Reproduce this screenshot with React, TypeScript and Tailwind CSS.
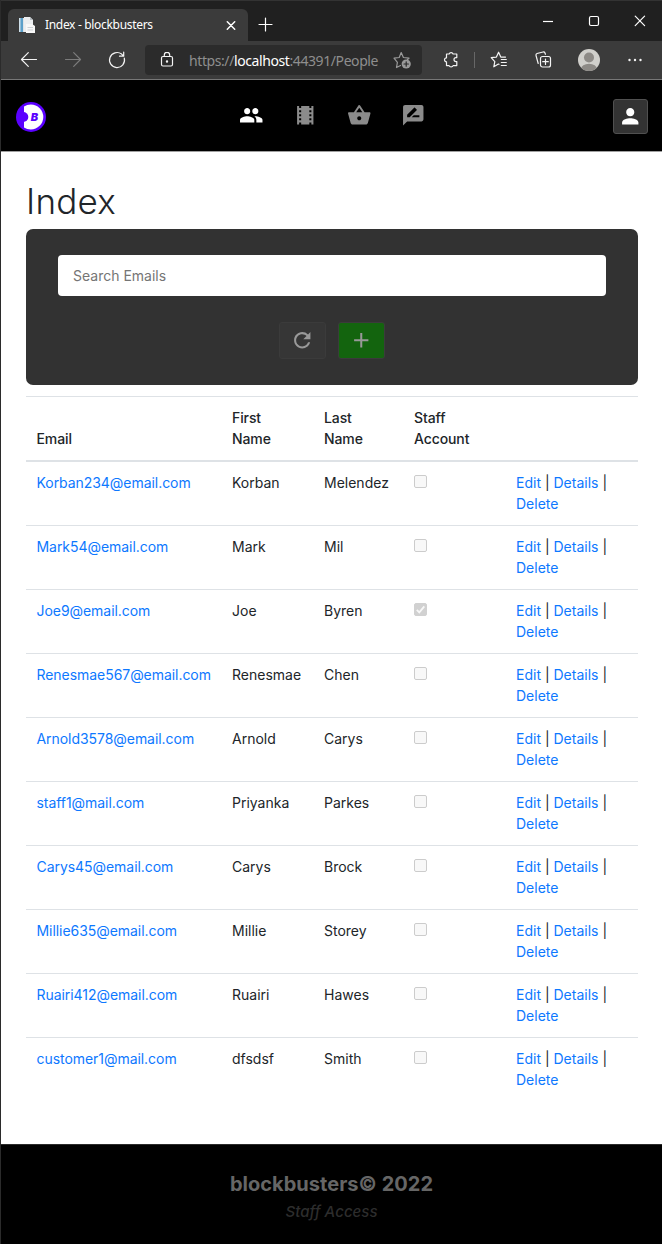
import type { ReactNode } from "react";
import {
  MdAdd,
  MdPeople,
  MdPerson,
  MdRateReview,
  MdRefresh,
  MdShoppingBasket,
  MdTheaters,
} from "react-icons/md";

const people = [
  { email: "Korban234@email.com", first: "Korban", last: "Melendez", staff: false },
  { email: "Mark54@email.com", first: "Mark", last: "Mil", staff: false },
  { email: "Joe9@email.com", first: "Joe", last: "Byren", staff: true },
  { email: "Renesmae567@email.com", first: "Renesmae", last: "Chen", staff: false },
  { email: "Arnold3578@email.com", first: "Arnold", last: "Carys", staff: false },
  { email: "staff1@mail.com", first: "Priyanka", last: "Parkes", staff: false },
  { email: "Carys45@email.com", first: "Carys", last: "Brock", staff: false },
  { email: "Millie635@email.com", first: "Millie", last: "Storey", staff: false },
  { email: "Ruairi412@email.com", first: "Ruairi", last: "Hawes", staff: false },
  { email: "customer1@mail.com", first: "dfsdsf", last: "Smith", staff: false },
];

function Line({ w, h, className, children }: { w: number; h: number; className?: string; children: ReactNode }) {
  return (
    <svg
      width={w}
      height={h}
      viewBox={`0 0 ${w} ${h}`}
      fill="none"
      stroke="currentColor"
      strokeWidth="1.2"
      strokeLinecap="round"
      strokeLinejoin="round"
      className={`shrink-0 ${className ?? ""}`}
    >
      {children}
    </svg>
  );
}

function TabStrip() {
  return (
    <div className="flex h-[41px] items-start border-t border-[#333333] bg-[#202020] pl-[7px] text-white">
      <div className="mt-2 flex h-8 w-[240px] items-center rounded-t-md bg-[#3b3b3b] pr-2 pl-[11px]">
        <svg width="16" height="17" viewBox="0 0 16 17" className="shrink-0">
          <path d="M0 1h10v14H0z" fill="#dfe3e6" />
          <path d="M0 1h4v14H0z" fill="#5b9fc9" />
          <path d="M0 1h1.500v14H0z" fill="#cfe0ea" />
          <path d="M5 0h6l3 3v12H5z" fill="#eceef0" />
          <path d="M11 0l3 3h-3z" fill="#b9bfc4" />
          <path d="M7 7h6l3 2v7H7z" fill="#f8f8f8" />
          <path d="M8.500 10.500H14M8.500 13H14" stroke="#cdd1d5" />
        </svg>
        <span className="ml-[10px] text-[12px] tracking-[-0.32px] whitespace-nowrap">Index - blockbusters</span>
        <Line w={10} h={10} className="mr-[4px] ml-auto">
          <path d="M1.300 1.800l7.400 7.400M8.700 1.800L1.300 9.200" strokeWidth="1.500" />
        </Line>
      </div>
      <Line w={16} h={16} className="mt-[16px] ml-[10px]">
        <path d="M7.500 1v13M1 7.500h13" />
      </Line>
      <Line w={12} h={12} className="mt-[14px] ml-auto">
        <path d="M1 6.500h10" strokeLinecap="butt" />
      </Line>
      <Line w={12} h={12} className="mt-[14px] ml-[34px]">
        <rect x="1.500" y="1.500" width="9" height="9" rx="1.500" />
      </Line>
      <Line w={12} h={12} className="mt-[14px] mr-[16px] ml-[34px]">
        <path d="M1.200 1.200l9.400 9.400M10.600 1.200L1.200 10.600" />
      </Line>
    </div>
  );
}

function Toolbar() {
  return (
    <div className="flex h-[39px] items-center border-b border-[#777777] bg-[#3b3b3b] text-[#f4f4f4]">
      <Line w={18} h={18} className="ml-[19px]">
        <path d="M16.500 8.500H1.500M8.300 1.700L1.500 8.500l6.800 6.800" />
      </Line>
      <Line w={18} h={18} className="ml-[26px] text-[#7c7c7c]">
        <path d="M1.500 8.500h15M9.700 1.700l6.800 6.800-6.800 6.800" />
      </Line>
      <Line w={18} h={18} className="ml-[26px]">
        <path d="M16.300 7.200A7.500 7.500 0 1 1 13.600 3.100L15.500 4.900M15.700 1v4.200h-4.200" />
      </Line>
      <div className="ml-[19px] flex h-[30px] w-[277px] items-center rounded-[4px] bg-[#2b2b2b] pl-[14px]">
        <Line w={16} h={16}>
          <rect x="2.500" y="4.500" width="11" height="9.500" rx="1.500" />
          <path d="M5.300 4.500V3a2.700 2.700 0 0 1 5.400 0v1.500" />
          <circle cx="8" cy="9.500" r=".6" fill="currentColor" />
        </Line>
        <span className="ml-[14px] text-[14px] tracking-[-0.41px] whitespace-nowrap text-[#8e8e8e]">
          https://<span className="text-white">localhost</span>:44391/People
        </span>
        <Line w={18} h={18} className="mr-[11px] ml-auto text-[#9a9a9a]">
          <path d="M7.500 14.500L3.500 16.500l.9-5.200L1 7.200l5.200-.7L8.200 1.500l2.200 5 5.600.7-1.500 1.300" />
          <circle cx="13.200" cy="13" r="4.600" fill="currentColor" stroke="none" />
          <path d="M13.200 10.800v4.400M11 13h4.400" stroke="#2b2b2b" />
        </Line>
      </div>
      <Line w={16} h={18} className="ml-[21px]">
        <path d="M3.500 3h2.600a2.100 1.900 0 0 1 4 0h3.700v3.600h-.8a2 2 0 0 0 0 4h.8v4h-3.700a2.100 1.900 0 0 1-4 0H3.500v-3.800a2 2 0 0 1 0-4z" />
      </Line>
      <div className="ml-[15px] h-4 w-px bg-[#676767]" />
      <Line w={18} h={18} className="ml-[15px]">
        <path d="M9 13.300L8.400 13 3.800 15.800l1-5.100L1.200 6.700l5.200-.6L8.600 1.200l2.200 4.900h4.700M11.300 8.500h5M11.300 11.500h5M11.300 14.500h5" />
      </Line>
      <Line w={18} h={18} className="ml-[26px]">
        <path d="M4.200 12.500L2 4.500q-.3-1.500 1-2L9 1q1.500-.2 2 1l.4 1.300" />
        <rect x="6.500" y="5.500" width="10" height="10.500" rx="2" />
        <path d="M11.500 8v5.500M8.700 10.700h5.600" />
      </Line>
      <svg width="22" height="22" viewBox="0 0 22 22" className="ml-[26px] shrink-0">
        <clipPath id="avatar-disc">
          <circle cx="11" cy="11" r="11" />
        </clipPath>
        <g clipPath="url(#avatar-disc)">
          <path d="M0 0h22v22H0z" fill="#d0cfcb" />
          <circle cx="11" cy="8.500" r="5" fill="#8d8a86" />
          <ellipse cx="11" cy="20" rx="8" ry="5.200" fill="#8d8a86" />
        </g>
      </svg>
      <svg width="16" height="4" viewBox="0 0 16 4" fill="currentColor" className="ml-[27px] shrink-0">
        <circle cx="2.500" cy="2" r="1.200" />
        <circle cx="8" cy="2" r="1.200" />
        <circle cx="13.500" cy="2" r="1.200" />
      </svg>
    </div>
  );
}

function SiteNav() {
  return (
    <nav className="grid h-[72px] grid-cols-[1fr_auto_1fr] items-center border-b border-[#a0a0a0] bg-black pr-[14px] pl-[15px]">
      <svg width="30" height="30" viewBox="0 0 30 30" className="mt-[2px]">
        <clipPath id="logo-face">
          <path d="M8 0h22v30H8z" />
        </clipPath>
        <circle cx="15" cy="15" r="15" fill="#5a00ff" />
        <circle cx="14.800" cy="15" r="12.500" fill="#fff" clipPath="url(#logo-face)" />
        <circle cx="7.300" cy="15" r="5" fill="#5a00ff" />
        <text x="14.800" y="19" fontSize="11" fontWeight="900" fontStyle="italic" fill="#5a00ff" fontFamily="Inter, sans-serif">
          B
        </text>
      </svg>
      <div className="flex items-center gap-[29.500px] pb-[1px] text-[24.500px] text-[#8b8b8b]">
        <MdPeople className="text-white" />
        <MdTheaters />
        <MdShoppingBasket />
        <MdRateReview />
      </div>
      <button className="mt-[1px] flex size-[35px] items-center justify-center justify-self-end rounded-[3px] border border-[#505050] bg-[#333333] text-[24.500px] text-white">
        <MdPerson />
      </button>
    </nav>
  );
}

function StaffBox({ checked }: { checked: boolean }) {
  return (
    <svg width="13" height="13" viewBox="0 0 13 13" className="mt-[3px]">
      <rect
        x=".5"
        y=".5"
        width="12"
        height="12"
        rx="1.500"
        fill={checked ? "#d1d1d1" : "#f8f8f8"}
        stroke={checked ? "#d1d1d1" : "#cccccc"}
      />
      {checked && <path d="M2.800 6.800l2.500 2.500 5-6" fill="none" stroke="#f8f8f8" strokeWidth="1.800" />}
    </svg>
  );
}

const cell = "border-t border-[#dee2e6] px-[10.5px] pt-[9.5px] pb-[11.5px]";
const head =
  "border-t border-b-2 border-[#dee2e6] px-[10.5px] pt-[9.5px] pb-[11.5px] align-bottom font-[550] tracking-[-0.1px]";
const link = "text-[#0d78ff]";

function PeopleTable() {
  return (
    <table className="mt-[11px] w-full table-fixed border-collapse text-left align-top text-[14px] leading-[21px]">
      <colgroup>
        <col className="w-[195.5px]" />
        <col className="w-[92px]" />
        <col className="w-[90px]" />
        <col className="w-[102px]" />
        <col />
      </colgroup>
      <thead>
        <tr>
          <th className={head}>Email</th>
          <th className={head}>First Name</th>
          <th className={head}>Last Name</th>
          <th className={head}>Staff Account</th>
          <th className={head} />
        </tr>
      </thead>
      <tbody>
        {people.map((p) => (
          <tr key={p.email} className="align-top">
            <td className={`${cell} ${link} tracking-[-0.05px]`}>{p.email}</td>
            <td className={cell}>{p.first}</td>
            <td className={cell}>{p.last}</td>
            <td className={cell}>
              <StaffBox checked={p.staff} />
            </td>
            <td className={cell}>
              <a className={link}>Edit</a> | <a className={link}>Details</a> | <a className={link}>Delete</a>
            </td>
          </tr>
        ))}
      </tbody>
    </table>
  );
}

export default function App() {
  return (
    <div className="flex h-[1244px] w-[662px] flex-col overflow-hidden border-l border-[#2b2b2b] bg-white font-['Inter',sans-serif] text-[#212529]">
      <header className="font-['Noto_Sans',sans-serif]">
        <TabStrip />
        <Toolbar />
      </header>
      <SiteNav />
      <main className="flex-1 pt-[28px] pr-6 pl-[25px]">
        <h1 className="h-[49px] text-[35px] leading-[42px] font-light tracking-[0.2px]">Index</h1>
        <section className="h-[156px] rounded-[7px] bg-[#323232] px-8 pt-[26px]">
          <input
            placeholder="Search Emails"
            className="block h-[41px] w-full rounded-[4px] bg-white px-[15px] text-[14px] placeholder:text-[#757575]"
          />
          <div className="mt-[26px] flex justify-center gap-[12px] text-[24.5px] text-[#999999]">
            <button className="flex h-[37px] w-[47px] items-center justify-center rounded-[3px] border border-[#3b3b3b] bg-[#363636]">
              <MdRefresh />
            </button>
            <button className="flex h-[37px] w-[47px] items-center justify-center rounded-[3px] border border-[#3b3b3b] bg-[#13640e]">
              <MdAdd />
            </button>
          </div>
        </section>
        <PeopleTable />
      </main>
      <footer className="h-[100px] border-t border-[#2b2b2b] bg-black pt-[25px] text-center">
        <p className="text-[20px] leading-[28px] font-bold tracking-[0.03px] text-[#666666]">blockbusters© 2022</p>
        <p className="text-[15px] leading-[27px] font-medium tracking-[0.05px] text-[#2d2d2d] italic">Staff Access</p>
      </footer>
    </div>
  );
}
